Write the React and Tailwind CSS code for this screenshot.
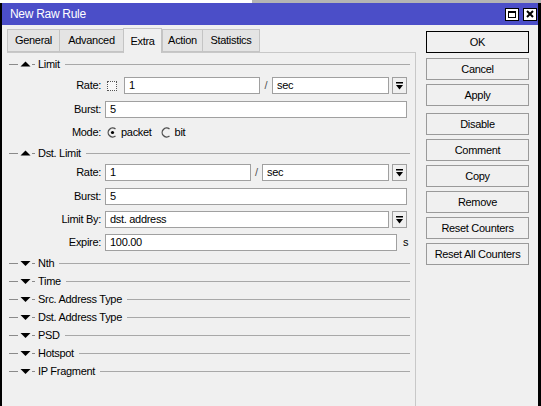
import React from "react";

const inputCls = "h-[17px] bg-white border border-[#a0a0a0] pl-[4px] flex items-center shrink-0";

function DropBtn() {
  return (
    <div className="ml-[3px] w-[15px] h-[17px] border border-[#a0a0a0] bg-[#f0f0f0] flex items-center justify-center shrink-0">
      <svg width="7" height="8" viewBox="0 0 7 8">
        <rect x="0" y="0" width="7" height="1.5" fill="#000" />
        <polygon points="0,3 7,3 3.5,7.5" fill="#000" />
      </svg>
    </div>
  );
}

function Section({ title, open }) {
  return (
    <div className="flex items-center h-[18px]">
      <svg width="27" height="10" viewBox="0 0 27 10" className="ml-[2px] shrink-0">
        <line x1="0" y1="5.5" x2="9" y2="5.5" stroke="#8a8a8a" strokeWidth="1" />
        {open ? (
          <polygon points="11.5,7.5 21.5,7.5 16.5,2.5" fill="#000" />
        ) : (
          <polygon points="11.5,3 21.5,3 16.5,8" fill="#000" />
        )}
        <line x1="23" y1="5.5" x2="26" y2="5.5" stroke="#8a8a8a" strokeWidth="1" />
      </svg>
      <span className="ml-[2px] whitespace-nowrap">{title}</span>
      <div className="flex-1 h-px bg-[#a8a8a8] ml-[5px] mr-[5px]" />
    </div>
  );
}

function Label({ children }) {
  return <span className="w-[94px] text-right shrink-0 whitespace-nowrap">{children}</span>;
}

function Radio({ checked }) {
  return (
    <svg width="11" height="11" viewBox="0 0 11 11" className="shrink-0">
      <path d="M8.5 2 A4.5 4.5 0 1 0 8.5 9" fill="none" stroke="#505050" strokeWidth="1.3" />
      {checked && <circle cx="5.5" cy="5.5" r="1.6" fill="#000" />}
    </svg>
  );
}

function Btn({ children, primary, className = "" }) {
  return (
    <div
      className={
        "h-[22px] w-[103px] flex items-center justify-center bg-[#f0f0f0] border " +
        (primary ? "border-black " : "border-[#9a9a9a] ") +
        className
      }
    >
      {children}
    </div>
  );
}

const tabs = [
  { name: "General", w: "w-[52px]" },
  { name: "Advanced", w: "w-[64px]" },
  { name: "Extra", w: "w-[39px]", active: true },
  { name: "Action", w: "w-[40px]" },
  { name: "Statistics", w: "w-[58px]" },
];

export default function App() {
  return (
    <div className="w-[541px] h-[406px] overflow-hidden flex flex-col bg-[#f0f0f0] text-black text-[11px] tracking-[-0.3px] font-['Liberation_Sans',Arial,sans-serif]">
      {/* strip above the window */}
      <div className="h-[3px] flex shrink-0">
        <div className="w-[252px] bg-white" />
        <div className="flex-1 bg-[#b4b4b4]" />
      </div>

      <div className="flex-1 flex flex-col border-l-2 border-r-[3px] border-black">
        {/* title bar */}
        <div className="h-[22px] bg-[#4b4ec8] flex items-center justify-between pl-2 pr-[1px] shrink-0">
          <span className="text-white text-[12px]">New Raw Rule</span>
          <div className="flex gap-[4px]">
            <div className="w-[14px] h-[13px] bg-white border border-black flex items-center justify-center">
              <div className="w-[8px] h-[7px] border border-black border-t-2" />
            </div>
            <div className="w-[14px] h-[13px] bg-white border border-black flex items-center justify-center">
              <svg width="8" height="8" viewBox="0 0 8 8">
                <path d="M1 1 L7 7 M7 1 L1 7" stroke="#000" strokeWidth="2" />
              </svg>
            </div>
          </div>
        </div>

        <div className="flex flex-1">
          {/* left column */}
          <div className="w-[414px] flex flex-col shrink-0">
            <div className="flex items-end h-[27px] pl-[5px]">
              {tabs.map((t) =>
                t.active ? (
                  <div
                    key={t.name}
                    className={t.w + " h-[25px] -mb-px relative z-10 bg-[#f0f0f0] border border-b-0 border-[#c4c4c4] flex items-center justify-center"}
                  >
                    {t.name}
                  </div>
                ) : (
                  <div
                    key={t.name}
                    className={t.w + " h-[23px] bg-[#e4e4e4] border border-r-0 border-[#c4c4c4] last:border-r flex items-center justify-center"}
                  >
                    {t.name}
                  </div>
                )
              )}
            </div>

            <div className="ml-[5px] flex-1 border-t border-r border-[#c8c8c8] flex flex-col pt-[2px]">
              <Section title="Limit" open />
              <div className="flex items-center h-[17px] mt-[4px]">
                <Label>Rate:</Label>
                <div className="ml-[6px] w-[10px] h-[10px] bg-[#f8f8f8] border border-dotted border-[#555] shrink-0" />
                <div className={inputCls + " ml-[7px] w-[136px]"}>1</div>
                <span className="w-[12px] text-center text-[#555]">/</span>
                <div className={inputCls + " w-[117px]"}>sec</div>
                <DropBtn />
              </div>
              <div className="flex items-center h-[17px] mt-[7px]">
                <Label>Burst:</Label>
                <div className={inputCls + " ml-[4px] w-[302px]"}>5</div>
              </div>
              <div className="flex items-center h-[17px] mt-[6px]">
                <Label>Mode:</Label>
                <div className="ml-[6px]"><Radio checked /></div>
                <span className="ml-[3px]">packet</span>
                <div className="ml-[9px]"><Radio /></div>
                <span className="ml-[3px]">bit</span>
              </div>

              <div className="mt-[3px]">
                <Section title="Dst. Limit" open />
              </div>
              <div className="flex items-center h-[17px] mt-[2px]">
                <Label>Rate:</Label>
                <div className={inputCls + " ml-[4px] w-[146px]"}>1</div>
                <span className="w-[11px] text-center text-[#555]">/</span>
                <div className={inputCls + " w-[127px]"}>sec</div>
                <DropBtn />
              </div>
              <div className="flex items-center h-[17px] mt-[7px]">
                <Label>Burst:</Label>
                <div className={inputCls + " ml-[4px] w-[302px]"}>5</div>
              </div>
              <div className="flex items-center h-[17px] mt-[6px]">
                <Label>Limit By:</Label>
                <div className={inputCls + " ml-[4px] w-[284px]"}>dst. address</div>
                <DropBtn />
              </div>
              <div className="flex items-center h-[17px] mt-[6px]">
                <Label>Expire:</Label>
                <div className={inputCls + " ml-[4px] w-[292px]"}>100.00</div>
                <span className="ml-[6px]">s</span>
              </div>

              <div className="mt-[3px] flex flex-col">
                {["Nth", "Time", "Src. Address Type", "Dst. Address Type", "PSD", "Hotspot", "IP Fragment"].map((s) => (
                  <Section key={s} title={s} />
                ))}
              </div>
            </div>
          </div>

          {/* right column: buttons */}
          <div className="ml-[10px] pt-[6px] flex flex-col">
            <Btn primary>OK</Btn>
            <Btn className="mt-[5px]">Cancel</Btn>
            <Btn className="mt-[4px]">Apply</Btn>
            <Btn className="mt-[7px]">Disable</Btn>
            <Btn className="mt-[4px]">Comment</Btn>
            <Btn className="mt-[4px]">Copy</Btn>
            <Btn className="mt-[4px]">Remove</Btn>
            <Btn className="mt-[4px]">Reset Counters</Btn>
            <Btn className="mt-[4px]">Reset All Counters</Btn>
          </div>
        </div>
      </div>
    </div>
  );
}
